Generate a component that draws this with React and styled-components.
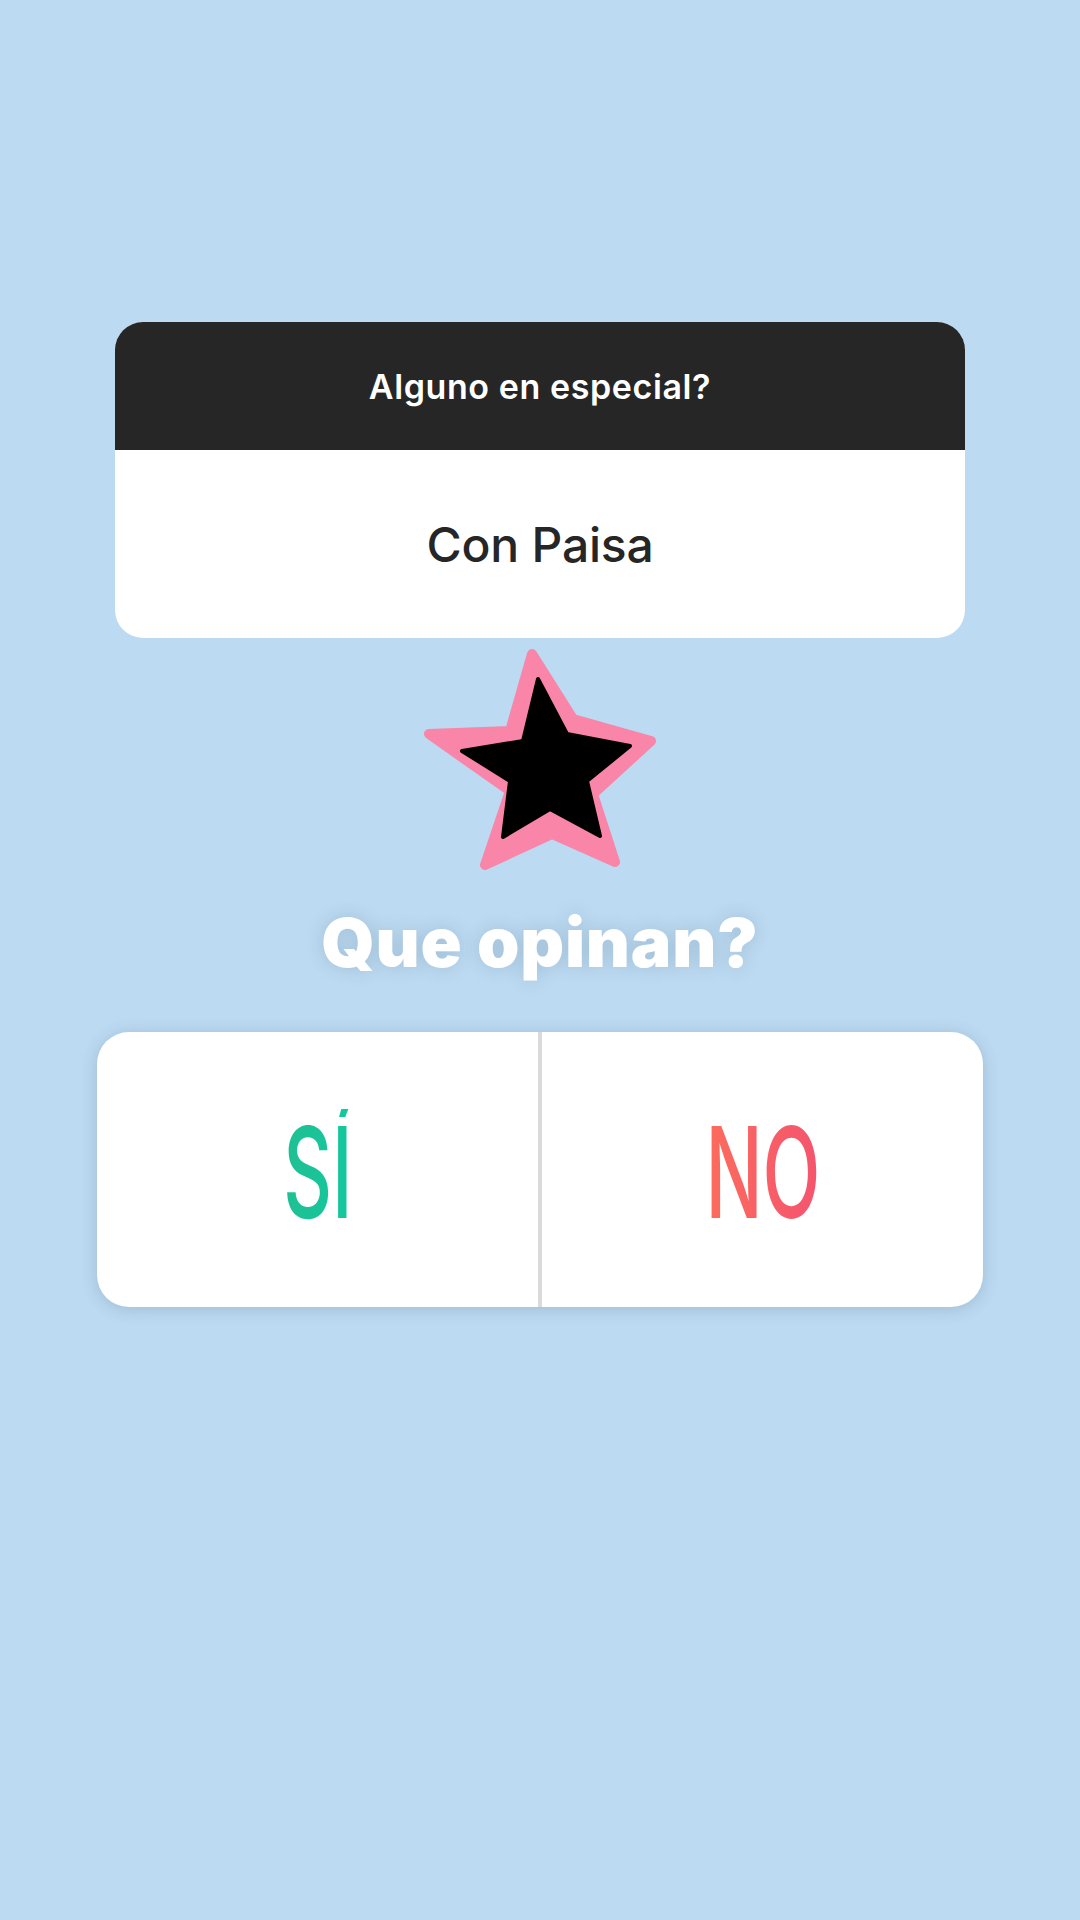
import styled, { createGlobalStyle } from 'styled-components';

const GlobalStyle = createGlobalStyle`
  html, body {
    margin: 0;
    padding: 0;
    background: #bcdaf1;
  }
  body {
    font-family: Inter, "Noto Sans", "Liberation Sans", sans-serif;
  }
`;

const Page = styled.div`
  width: 1080px;
  height: 1920px;
  background: #bcdaf1;
  display: flex;
  flex-direction: column;
  align-items: center;
  padding-top: 322px;
  box-sizing: border-box;
`;

const QuestionCard = styled.div`
  width: 850px;
  border-radius: 28px;
  overflow: hidden;
  background: #fff;
  display: flex;
  flex-direction: column;
`;

const QuestionHeader = styled.div`
  height: 128px;
  background: #262626;
  color: #fff;
  display: flex;
  align-items: center;
  justify-content: center;
  font-size: 34px;
  font-weight: 600;
  letter-spacing: 0.6px;
`;

const Answer = styled.div`
  height: 188px;
  display: flex;
  align-items: center;
  justify-content: center;
  color: #262626;
  font-size: 48px;
  font-weight: 500;
  letter-spacing: -0.2px;
`;

const Sticker = styled.svg`
  display: block;
  margin-top: 6px;
  width: 240px;
  height: 232px;
`;

const Title = styled.h2`
  margin: 26px 0 0;
  color: #fff;
  font-size: 68px;
  font-weight: 900;
  line-height: 80px;
  letter-spacing: 0.8px;
  text-shadow: 0 0 18px rgba(40, 70, 100, 0.18);
`;

const Poll = styled.div`
  margin-top: 50px;
  width: 886px;
  height: 275px;
  background: #fff;
  border-radius: 32px;
  box-shadow: 0 2px 16px rgba(50, 80, 110, 0.22);
  display: flex;
  overflow: hidden;
`;

const Option = styled.div`
  flex: 1;
  display: flex;
  align-items: center;
  justify-content: center;
`;

const Divider = styled.div`
  width: 4px;
  background: #dadada;
`;

const OptionLabel = styled.span`
  display: inline-block;
  font-size: 126px;
  font-weight: 500;
  line-height: 1;
  transform: scaleX(0.6);
  background: ${p => p.$gradient};
  -webkit-background-clip: text;
  background-clip: text;
  color: transparent;
  margin-top: 4px;
`;

const outer = '532,650 573,715 651,737 593,790 615,858 552,830 485,861 510,787 429,730 510,727';
const inner = '538,675 567,730 630,742 587,777 600,832 550,805 503,833 510,777 462,747 523,737';

function Star() {
  return (
    <Sticker viewBox="420 640 240 232">
      <polygon
        points={outer}
        fill="#f985a8"
        stroke="#f985a8"
        strokeWidth="10"
        strokeLinejoin="round"
      />
      <polygon
        points={inner}
        fill="#000"
        stroke="#000"
        strokeWidth="4"
        strokeLinejoin="round"
      />
    </Sticker>
  );
}

export default function App() {
  return (
    <>
      <GlobalStyle />
      <Page>
        <QuestionCard>
          <QuestionHeader>Alguno en especial?</QuestionHeader>
          <Answer>Con Paisa</Answer>
        </QuestionCard>

        <Star />

        <Title>Que opinan?</Title>

        <Poll>
          <Option>
            <OptionLabel $gradient="linear-gradient(90deg, #1fc092, #14c79f)">SÍ</OptionLabel>
          </Option>
          <Divider />
          <Option>
            <OptionLabel $gradient="linear-gradient(90deg, #fc6c5c, #f4546f)">NO</OptionLabel>
          </Option>
        </Poll>
      </Page>
    </>
  );
}
